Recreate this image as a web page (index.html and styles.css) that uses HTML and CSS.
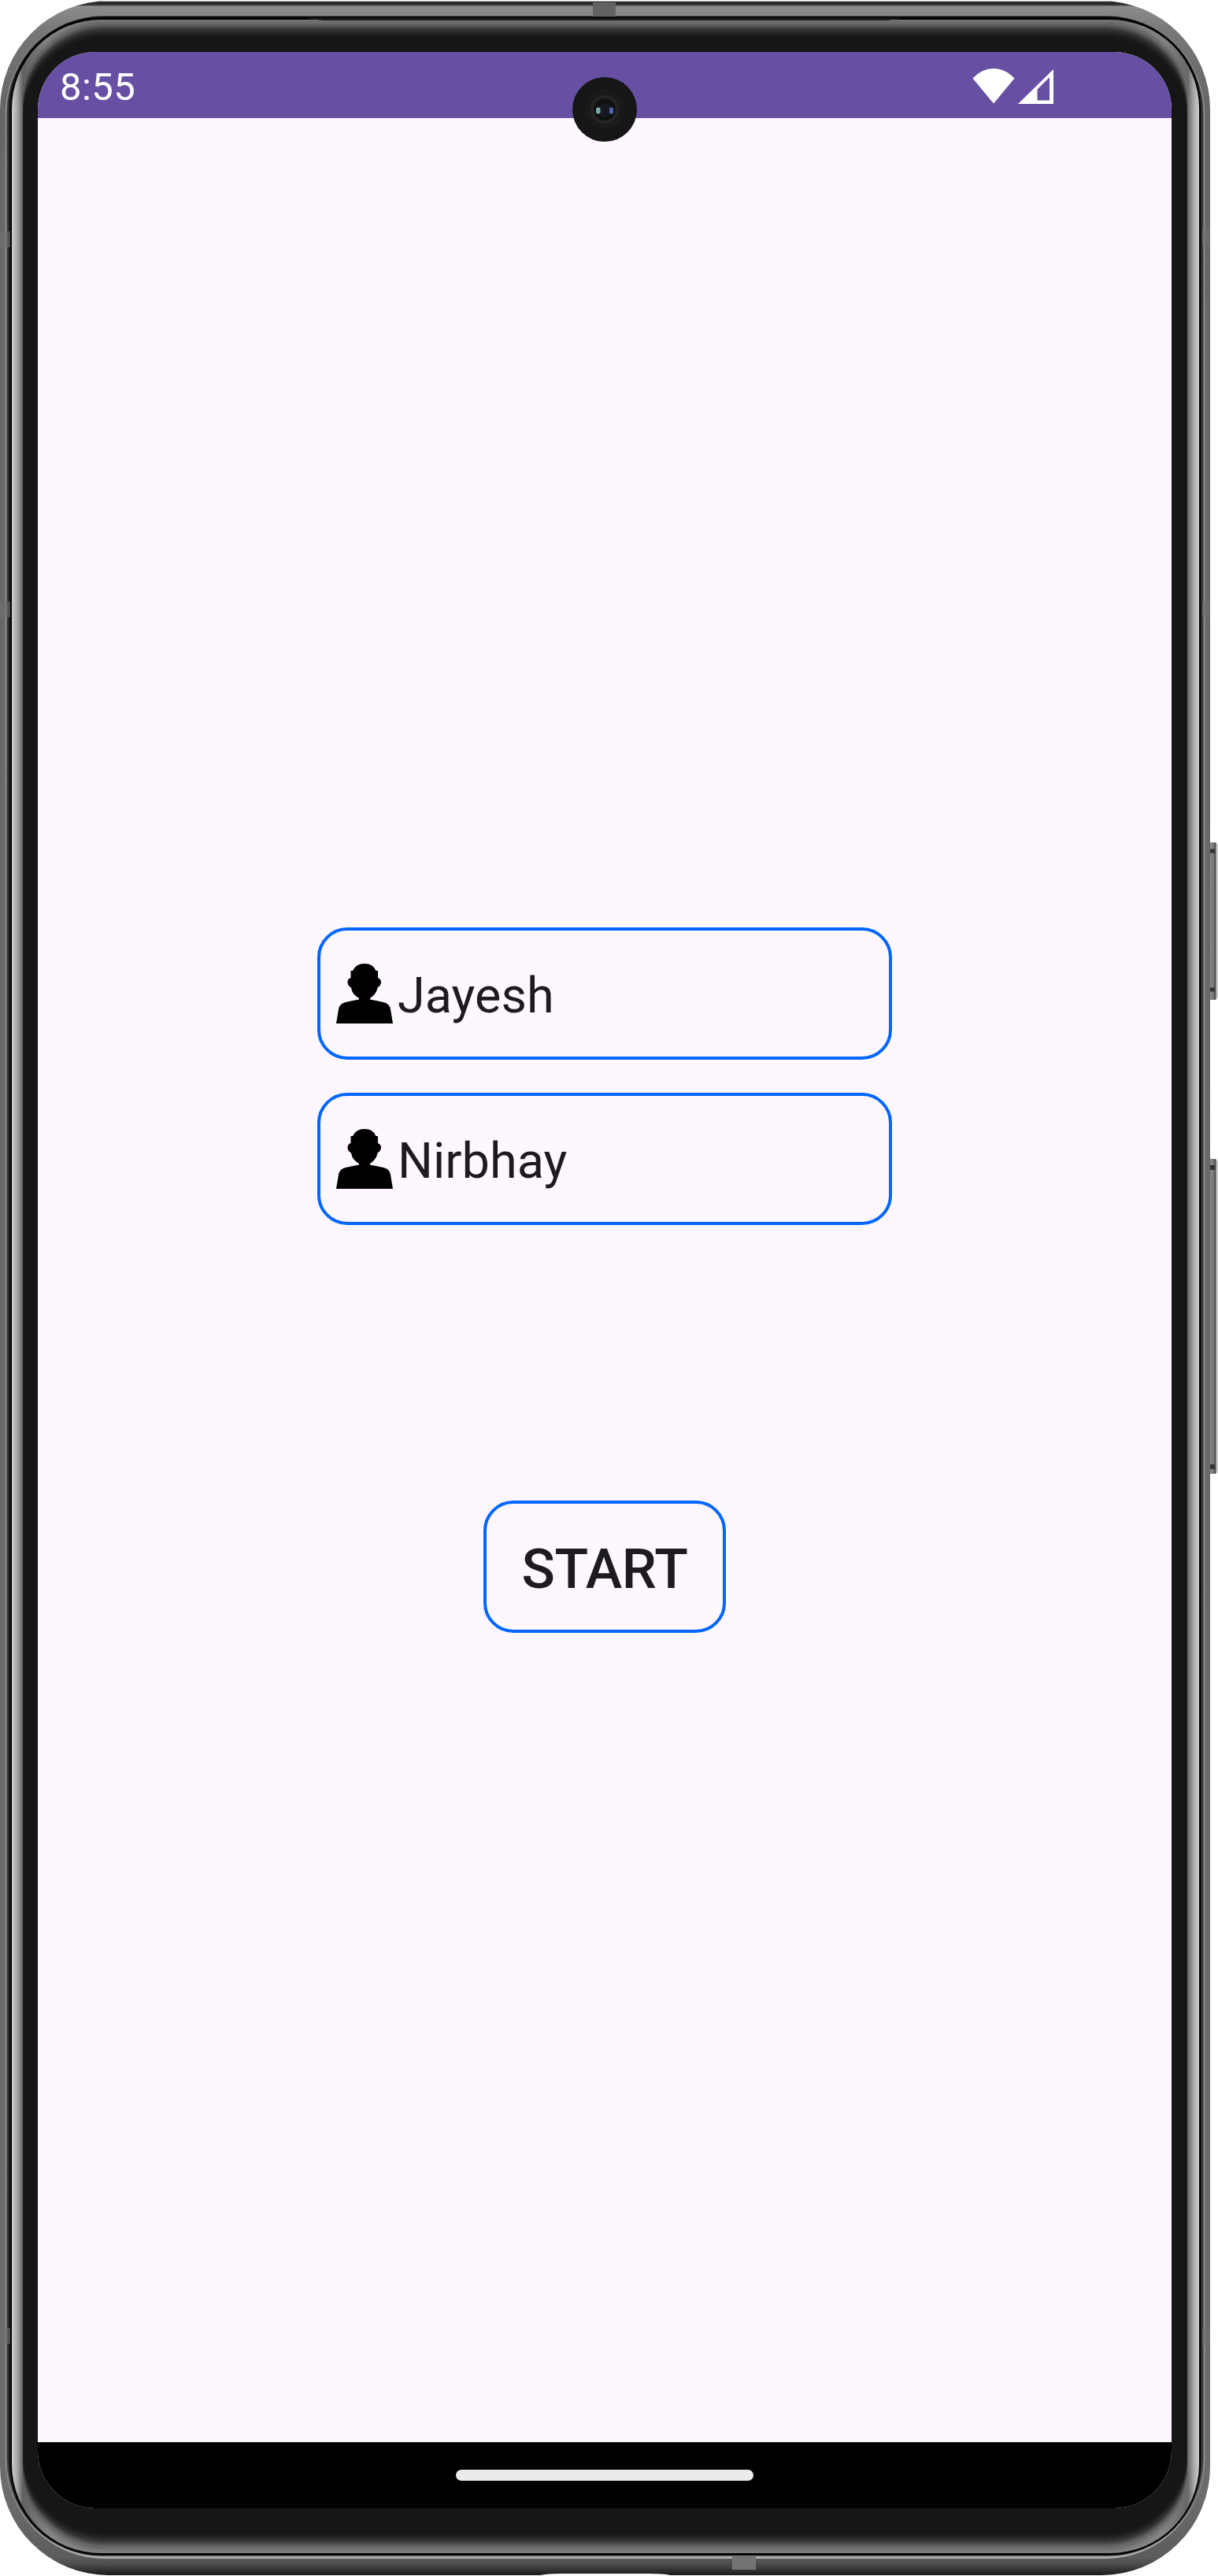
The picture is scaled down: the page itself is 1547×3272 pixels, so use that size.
FILE: index.html
```html
<!DOCTYPE html>
<html lang="en">
<head>
<meta charset="utf-8">
<title>Players</title>
<link rel="stylesheet" href="styles.css">
</head>
<body>
<div class="device">
  <svg class="frame" viewBox="0 0 1547 3272" aria-hidden="true">
    <defs>
      <linearGradient id="metal" gradientUnits="userSpaceOnUse" x1="0" y1="1" x2="0" y2="3271">
        <stop offset="0" stop-color="#2a2c2b"/>
        <stop offset=".0015" stop-color="#2a2b2a"/>
        <stop offset=".0022" stop-color="#8c8c8c"/>
        <stop offset=".012" stop-color="#777"/>
        <stop offset=".04" stop-color="#666"/>
        <stop offset=".97" stop-color="#6c6c6c"/>
        <stop offset=".993" stop-color="#5c5c5c"/>
        <stop offset=".996" stop-color="#4a4a4a"/>
        <stop offset="1" stop-color="#1a1a1a"/>
      </linearGradient>
      <linearGradient id="rim" gradientUnits="userSpaceOnUse" x1="0" y1="20" x2="0" y2="3250">
        <stop offset="0" stop-color="#3d3d3d"/>
        <stop offset=".96" stop-color="#3d3d3d"/>
        <stop offset=".99" stop-color="#999"/>
        <stop offset="1" stop-color="#adadad"/>
      </linearGradient>
      <linearGradient id="glass" gradientUnits="userSpaceOnUse" x1="15" y1="0" x2="1523" y2="0">
        <stop offset="0" stop-color="#d0d0d0"/>
        <stop offset=".005" stop-color="#a2a2a2"/>
        <stop offset=".0092" stop-color="#606060"/>
        <stop offset=".03" stop-color="#858585"/>
        <stop offset=".97" stop-color="#858585"/>
        <stop offset=".9905" stop-color="#686868"/>
        <stop offset=".995" stop-color="#a2a2a2"/>
        <stop offset="1" stop-color="#d0d0d0"/>
      </linearGradient>
      <linearGradient id="key" x1="0" y1="0" x2="1" y2="0">
        <stop offset="0" stop-color="#555"/>
        <stop offset=".35" stop-color="#8a8a8a"/>
        <stop offset=".7" stop-color="#707070"/>
        <stop offset=".8" stop-color="#444"/>
        <stop offset=".9" stop-color="#c8c8c8"/>
        <stop offset="1" stop-color="#aaa"/>
      </linearGradient>
      <filter id="soften" x="-2%" y="-2%" width="104%" height="104%"><feGaussianBlur stdDeviation="0 7"/></filter>
      <clipPath id="glassClip"><rect x="15" y="25" width="1508" height="3218" rx="113"/></clipPath>
    </defs>
    <rect x="1532" y="1070" width="14.500" height="200" rx="4" fill="url(#key)"/>
    <path d="M1537 1081h6M1535 1257h8" stroke="#333" stroke-width="5"/>
    <rect x="1532" y="1472" width="14.500" height="400" rx="4" fill="url(#key)"/>
    <path d="M1537 1483h6M1535 1863h8" stroke="#333" stroke-width="6"/>
    <rect x="0" y="1" width="1537" height="3270" rx="138" fill="url(#metal)"/>
    <rect x="6.500" y="19" width="1524" height="3231" rx="127" fill="#8e8e8e"/>
    <rect x="8.500" y="20" width="1520" height="3230" rx="124" fill="url(#rim)"/>
    <rect x="11" y="21" width="1515" height="3225.500" rx="118" fill="#161616"/>
    <g fill="#707070" fill-opacity=".6">
      <path d="M0 294h13v20H0zM0 764h13v20H0zM0 2957h13v20H0zM1527 290h10v22h-10zM1527 764h10v20h-10zM1527 2957h10v22h-10z"/>
    </g>
    <path d="M930 3246h30v18h-30z" fill="#747474"/>
    <path d="M753 3h29v18h-29z" fill="#626262"/>
    <path d="M130 1.500H1408" stroke="#b9c2bb" stroke-width="1"/>
    <rect x="13.500" y="22" width="1511" height="3223" rx="115" fill="#000"/>
    <g clip-path="url(#glassClip)">
      <rect x="15" y="25" width="1508" height="3218" fill="url(#glass)"/>
      <rect x="29" y="34" width="1479" height="3197" rx="104" fill="#141414" filter="url(#soften)"/>
    </g>
    <path d="M390 23.500V23H1147l-20 3H410z" fill="#1c1c1c"/>
    <path d="M684 3272q5-3 30-3h110q25 0 30 3z" fill="#fff"/>
  </svg>

  <main class="screen">
    <header class="status">
      <span class="clock">8:55</span>
      <span class="signals">
        <svg width="54" height="45" viewBox="0 0 54 45"><path d="M27 44.500.5 12.500Q12 0 27 0t26.500 12.500z" fill="#fff"/></svg>
        <svg width="45" height="44" viewBox="0 0 45 44"><path fill="#fff" fill-rule="evenodd" d="M45 0v44H0zM40 10 24.500 25.500V39.500H40z"/></svg>
      </span>
    </header>
    <section class="content">
      <div class="field">
        <svg class="person" viewBox="0 0 72 76"><path d="M0 76 3 58Q4 51 12 49 20 47 29 45.500V44Q20 39 19 30.500 14.500 28 14.500 23.500T18.500 18V9H21Q25 0 36 0T50.500 9H53v9q4 1.500 4 5.500t-4.500 7Q51 39 43 44v1.500Q52 47 60 49q8 2 9 9L72 76z"/></svg>
        <span class="name">Jayesh</span>
      </div>
      <div class="field">
        <svg class="person" viewBox="0 0 72 76"><path d="M0 76 3 58Q4 51 12 49 20 47 29 45.500V44Q20 39 19 30.500 14.500 28 14.500 23.500T18.500 18V9H21Q25 0 36 0T50.500 9H53v9q4 1.500 4 5.500t-4.500 7Q51 39 43 44v1.500Q52 47 60 49q8 2 9 9L72 76z"/></svg>
        <span class="name">Nirbhay</span>
      </div>
      <button class="start" type="button">START</button>
    </section>
    <footer class="navigation"><span class="handle"></span></footer>
  </main>

  <svg class="camera" viewBox="0 0 82 82" aria-hidden="true">
    <circle cx="41" cy="41" r="41" fill="#161616"/>
    <circle cx="41" cy="41" r="25" fill="#1a1a1a"/>
    <circle cx="41" cy="41" r="18" fill="#242424"/>
    <circle cx="41" cy="41" r="14" fill="#101010"/>
    <circle cx="41" cy="42" r="9" fill="#171a22"/>
    <rect x="30" y="38.500" width="5.500" height="8" rx="2" fill="#70a9a5"/>
    <rect x="47" y="38.500" width="5" height="8" rx="2" fill="#5364b5"/>
  </svg>
</div>
</body>
</html>
```

FILE: styles.css
```css
* { box-sizing: border-box; }

body {
  margin: 0;
  background: #fff;
  font-family: Roboto, "Liberation Sans", sans-serif;
}

.device {
  position: relative;
  width: 1547px;
  height: 3272px;
  padding: 66px 59px 86px 48px;
  overflow: hidden;
}

.frame {
  position: absolute;
  inset: 0;
  width: 1547px;
  height: 3272px;
}

.screen {
  position: relative;
  display: flex;
  flex-direction: column;
  width: 1440px;
  height: 3120px;
  border-radius: 73px;
  overflow: hidden;
  background: #fef7ff;
  color: #1d1b20;
}

.status {
  display: flex;
  align-items: center;
  justify-content: space-between;
  height: 84px;
  padding: 3px 150px 0 28px;
  background: #6750a4;
  color: #fff;
}

.clock {
  padding-top: 1px;
  font-size: 49px;
  letter-spacing: 0.4px;
  line-height: 1;
}

.signals {
  display: flex;
  align-items: flex-end;
  gap: 4px;
}

.content {
  flex: 1;
  display: flex;
  flex-direction: column;
  align-items: center;
  gap: 42px;
  padding-top: 1028px;
}

.field {
  display: flex;
  align-items: center;
  gap: 6px;
  width: 730px;
  height: 168px;
  padding: 0 20px;
  border: 4px solid #0066ff;
  border-radius: 38px;
}

.person {
  width: 72px;
  height: 76px;
}

.name {
  padding-top: 5px;
  font-size: 63px;
  line-height: 74px;
}

.start {
  width: 308px;
  height: 168px;
  margin-top: 308px;
  padding: 6px 0 0;
  border: 4px solid #0066ff;
  border-radius: 38px;
  background: none;
  color: inherit;
  font: 500 70px/82px Roboto, "Liberation Sans", sans-serif;
  letter-spacing: -0.3px;
}

.navigation {
  display: flex;
  align-items: center;
  justify-content: center;
  height: 84px;
  background: #000;
}

.handle {
  width: 378px;
  height: 14px;
  border-radius: 7px;
  background: #ebebeb;
}

.camera {
  position: absolute;
  left: 727px;
  top: 98px;
  width: 82px;
  height: 82px;
}
```
